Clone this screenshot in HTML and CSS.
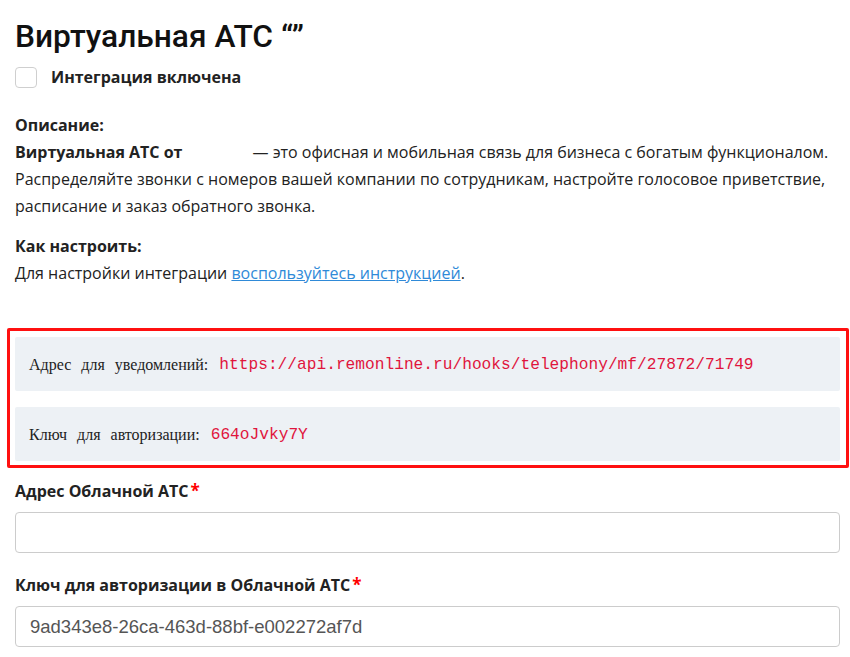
FILE: index.html
```html
<!DOCTYPE html>
<html lang="ru">
<head>
<meta charset="utf-8">
<link rel="stylesheet" href="styles.css">
</head>
<body>
<div class="page">
  <h1 class="title">Виртуальная АТС “”</h1>
  <label class="toggle">
    <span class="checkbox"></span>
    <span class="toggle-label">Интеграция включена</span>
  </label>

  <div class="section">
    <div class="section-head">Описание:</div>
    <p class="text"><b class="brand">Виртуальная АТС от</b><span class="lead">— это офисная и мобильная связь для бизнеса с богатым функционалом.</span> Распределяйте звонки с номеров вашей компании по сотрудникам, настройте голосовое приветствие, расписание и заказ обратного звонка.</p>
  </div>

  <div class="section">
    <div class="section-head">Как настроить:</div>
    <p class="text">Для настройки интеграции <a href="#" class="link">воспользуйтесь инструкцией</a>.</p>
  </div>

  <div class="highlight">
    <div class="info-row">
      <span class="info-label">Адрес для уведомлений:</span>
      <code class="info-code">https://api.remonline.ru/hooks/telephony/mf/27872/71749</code>
    </div>
    <div class="info-row">
      <span class="info-label">Ключ для авторизации:</span>
      <code class="info-code">664oJvky7Y</code>
    </div>
  </div>

  <div class="field">
    <div class="field-label">Адрес Облачной АТС<span class="req">*</span></div>
    <input class="input" type="text" value="">
  </div>

  <div class="field">
    <div class="field-label">Ключ для авторизации в Облачной АТС<span class="req">*</span></div>
    <input class="input" type="text" value="9ad343e8-26ca-463d-88bf-e002272af7d">
  </div>
</div>
</body>
</html>
```

FILE: styles.css
```css
* { box-sizing: border-box; }

html, body {
  margin: 0;
  padding: 0;
  background: #fff;
}

.page {
  padding: 0 10px 0 15px;
  font-family: "Open Sans", "Liberation Sans", sans-serif;
  color: #222;
  font-size: 16px;
}

.title {
  margin: 0;
  padding-top: 17px;
  font-family: Roboto, "Liberation Sans", sans-serif;
  font-weight: 500;
  font-size: 31.7px;
  line-height: 40px;
  color: #111;
}

.toggle {
  display: flex;
  align-items: center;
  gap: 14px;
  margin-top: 10px;
  height: 20px;
}

.checkbox {
  width: 22px;
  height: 21px;
  border: 1px solid #cfcfcf;
  border-radius: 4px;
  background: #fff;
}

.toggle-label {
  font-weight: 700;
  font-size: 16px;
  color: #222;
}

.section {
  margin-top: 25px;
}

.section + .section {
  margin-top: 13px;
}

.section-head {
  font-weight: 700;
  line-height: 27px;
  color: #222;
}

.text {
  margin: 0;
  line-height: 27px;
  color: #222;
}

.brand {
  font-weight: 700;
  margin-right: 70px;
}

.link {
  color: #2f8ad8;
  text-decoration: underline;
}

.highlight {
  margin: 41px -9px 0 -8px;
  border: 3px solid #ff1010;
  border-radius: 2px;
  padding: 6px 6px 4px 5px;
  display: flex;
  flex-direction: column;
  gap: 16px;
}

.info-row {
  background: #edf1f5;
  border-radius: 2px;
  height: 54px;
  display: flex;
  align-items: center;
  padding-left: 14px;
  padding-top: 2px;
}

.info-label {
  font-family: "Liberation Serif", serif;
  font-size: 16px;
  word-spacing: 6px;
  color: #222;
  margin-right: 11px;
}

.info-code {
  font-family: "Liberation Mono", monospace;
  font-size: 16.2px;
  color: #e0153d;
}

.field {
  margin-top: 12px;
}

.field + .field {
  margin-top: 21px;
}

.field-label {
  font-weight: 700;
  font-size: 16px;
  line-height: 22px;
  color: #222;
}

.req {
  color: #f00;
  margin-left: 2px;
  font-size: 17px;
}

.input {
  display: block;
  width: 100%;
  height: 41px;
  margin-top: 10px;
  border: 1px solid #ccc;
  border-radius: 4px;
  padding: 0 14px;
  font-family: "Liberation Sans", Arial, sans-serif;
  font-size: 18.5px;
  color: #555;
  background: #fff;
  outline: none;
}
```
